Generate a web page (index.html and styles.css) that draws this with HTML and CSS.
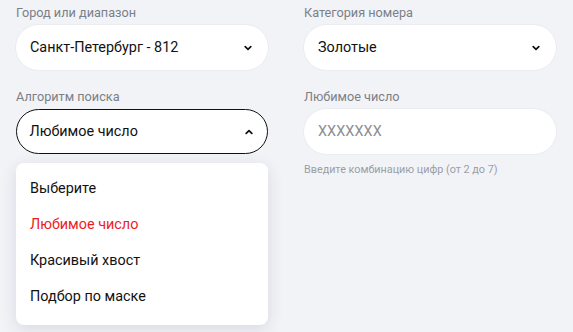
FILE: index.html
```html
<!DOCTYPE html>
<html lang="ru">
<head>
<meta charset="utf-8">
<link rel="stylesheet" href="styles.css">
</head>
<body>
<div class="form">
  <div class="field">
    <div class="label">Город или диапазон</div>
    <div class="select">
      <span class="value">Санкт-Петербург - 812</span>
      <svg class="chev" width="8" height="6" viewBox="0 0 8 6"><path d="M1.2 1.6 L4 4.3 L6.8 1.6" fill="none" stroke="#111" stroke-width="1.7" stroke-linecap="round" stroke-linejoin="round"/></svg>
    </div>
  </div>
  <div class="field">
    <div class="label">Категория номера</div>
    <div class="select">
      <span class="value">Золотые</span>
      <svg class="chev" width="8" height="6" viewBox="0 0 8 6"><path d="M1.2 1.6 L4 4.3 L6.8 1.6" fill="none" stroke="#111" stroke-width="1.7" stroke-linecap="round" stroke-linejoin="round"/></svg>
    </div>
  </div>
  <div class="field dd-wrap">
    <div class="label">Алгоритм поиска</div>
    <div class="select open">
      <span class="value">Любимое число</span>
      <svg class="chev" width="8" height="6" viewBox="0 0 8 6"><path d="M1.2 4.4 L4 1.7 L6.8 4.4" fill="none" stroke="#111" stroke-width="1.7" stroke-linecap="round" stroke-linejoin="round"/></svg>
    </div>
    <ul class="menu">
      <li>Выберите</li>
      <li class="active">Любимое число</li>
      <li>Красивый хвост</li>
      <li>Подбор по маске</li>
    </ul>
  </div>
  <div class="field">
    <div class="label">Любимое число</div>
    <div class="input"><span class="placeholder">XXXXXXX</span></div>
    <div class="hint">Введите комбинацию цифр (от 2 до 7)</div>
  </div>
</div>
</body>
</html>
```
FILE: styles.css
```css
html, body {
  margin: 0;
  padding: 0;
  background: #f2f3f7;
  font-family: Roboto, "Liberation Sans", sans-serif;
  color: #111;
}
body {
  width: 573px;
  height: 332px;
  overflow: hidden;
}
.form {
  display: grid;
  grid-template-columns: 252px 252px;
  column-gap: 36px;
  row-gap: 19px;
  padding: 5px 17px 0 16px;
}
.field {
  display: flex;
  flex-direction: column;
}
.dd-wrap {
  position: relative;
}
.label {
  font-size: 12.7px;
  line-height: 16px;
  color: #7b7f87;
  margin-bottom: 4px;
}
.select, .input {
  box-sizing: border-box;
  height: 45px;
  border-radius: 23px;
  background: #fff;
  display: flex;
  align-items: center;
  justify-content: space-between;
  padding: 0 16px 0 14px;
  box-shadow: 0 0 0 1px #ebecf0;
}
.select.open {
  border: 1.5px solid #111;
  box-shadow: none;
  padding: 0 14.5px 0 12.5px;
}
.value {
  font-size: 14.4px;
  color: #111;
}
.chev {
  display: block;
}
.placeholder {
  font-size: 14.4px;
  color: #8a8d93;
  letter-spacing: 0.1px;
}
.hint {
  font-size: 10.8px;
  color: #9a9ea6;
  margin-top: 9px;
  line-height: 14px;
}
.menu {
  position: absolute;
  top: 74px;
  left: 0;
  width: 252px;
  margin: 0;
  padding: 8px 0 10px;
  list-style: none;
  background: #fff;
  border-radius: 8px;
  box-shadow: 0 4px 16px rgba(30, 40, 70, 0.12);
  z-index: 2;
}
.menu li {
  height: 36px;
  line-height: 36px;
  padding-left: 14px;
  font-size: 14.4px;
  color: #111;
}
.menu li.active {
  color: #ee1b24;
}
```
